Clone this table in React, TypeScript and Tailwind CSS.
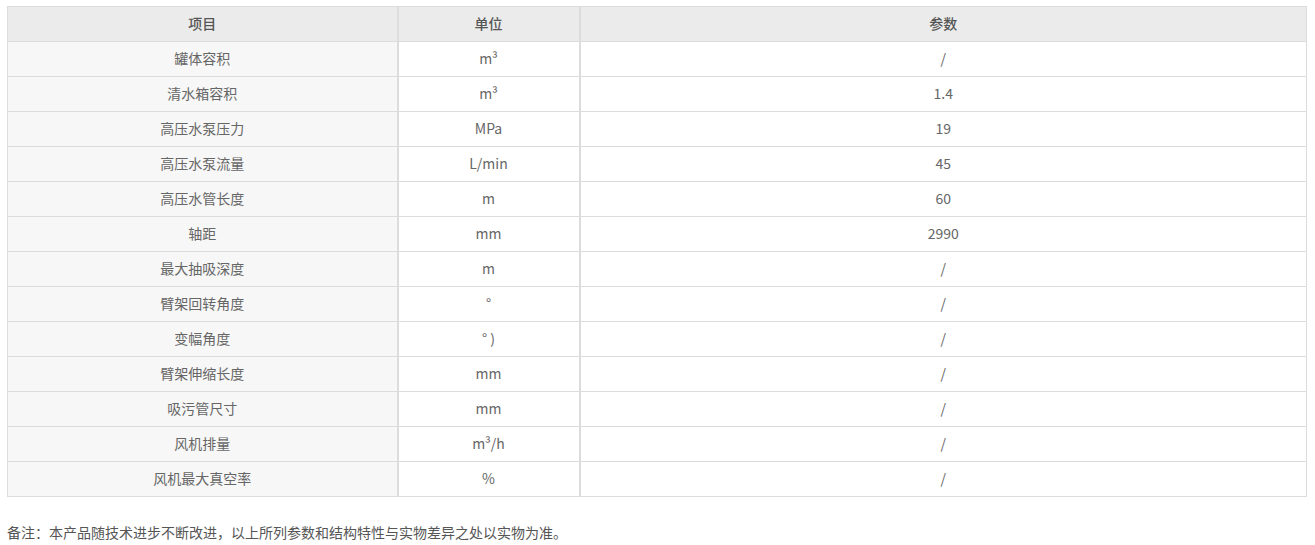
import React from "react";

const rows: [string, string, string][] = [
  ["罐体容积", "m³", "/"],
  ["清水箱容积", "m³", "1.4"],
  ["高压水泵压力", "MPa", "19"],
  ["高压水泵流量", "L/min", "45"],
  ["高压水管长度", "m", "60"],
  ["轴距", "mm", "2990"],
  ["最大抽吸深度", "m", "/"],
  ["臂架回转角度", "°", "/"],
  ["变幅角度", "° )", "/"],
  ["臂架伸缩长度", "mm", "/"],
  ["吸污管尺寸", "mm", "/"],
  ["风机排量", "m³/h", "/"],
  ["风机最大真空率", "%", "/"],
];

export default function App() {
  return (
    <div
      className="bg-white text-[#666] text-[14px] pl-[7px] pt-[6px] w-[1315px] h-[545px]"
      style={{ fontFamily: '"Microsoft YaHei", "Noto Sans CJK SC", "Noto Sans", sans-serif' }}
    >
      <table className="border-collapse table-fixed w-[1300px] border border-[#dcdcdc]">
        <colgroup>
          <col className="w-[390px]" />
          <col className="w-[182px]" />
          <col />
        </colgroup>
        <thead>
          <tr className="bg-[#ebebeb] h-[35px]">
            <th className="border-r-2 border-b border-[#dcdcdc] font-medium text-[#555] text-center pb-[1px]">项目</th>
            <th className="border-r-2 border-b border-[#dcdcdc] font-medium text-[#555] text-center pb-[1px]">单位</th>
            <th className="border-b border-[#dcdcdc] font-medium text-[#555] text-center pb-[1px]">参数</th>
          </tr>
        </thead>
        <tbody>
          {rows.map(([a, b, c], i) => (
            <tr key={i} className="h-[35px]">
              <td className="bg-[#f7f7f7] border-r-2 border-b border-[#dcdcdc] text-center pb-[1px]">{a}</td>
              <td className="border-r-2 border-b border-[#dcdcdc] text-center pb-[1px]">{b}</td>
              <td className="border-b border-[#dcdcdc] text-center pb-[1px]">{c}</td>
            </tr>
          ))}
        </tbody>
      </table>
      <p className="mt-[25px] text-[14px] text-[#555]">备注：本产品随技术进步不断改进，以上所列参数和结构特性与实物差异之处以实物为准。</p>
    </div>
  );
}
